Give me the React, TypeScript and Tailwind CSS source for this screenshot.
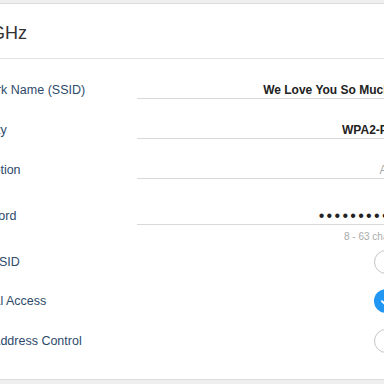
export default function App() {
  const label = "w-[175px] shrink-0 ml-[-2.5px] text-[12.5px] leading-[16px] text-[#2d4a6b] whitespace-nowrap";
  const Circle = ({ on }: { on?: boolean }) =>
    on ? (
      <div className="w-[24px] h-[24px] rounded-full bg-[#2196f3] flex items-center justify-center">
        <svg width="14" height="14" viewBox="0 0 14 14">
          <path d="M3 7.2 L6 10 L11 4.2" fill="none" stroke="white" strokeWidth="2" strokeLinecap="round" strokeLinejoin="round" />
        </svg>
      </div>
    ) : (
      <div className="w-[24px] h-[24px] rounded-full bg-white border-[1.5px] border-[#c4c4c4]" />
    );
  return (
    <div className="w-[384px] h-[384px] overflow-hidden bg-[#efefef] pt-[3px] font-['Liberation_Sans',Arial,sans-serif]">
      <div className="ml-[-50px] w-[500px] bg-white border-y border-[#dcdcdc]">
        <div className="h-[55px] flex items-center pt-[5px] pl-[16px] text-[18px] text-[#333] border-b border-[#e2e2e2]">
          2.4GHz
        </div>
        <div className="pt-[11px] pb-[18px] pl-[14px] flex flex-col">
          <div className="flex h-[40px] items-center">
            <div className={label}>Network Name (SSID)</div>
            <div className="w-[283px] h-[17px] border-b border-[#d9d9d9] text-right leading-[16px] text-[12px] font-bold text-[#222] pr-[29px] whitespace-nowrap">
              We Love You So Much
            </div>
          </div>
          <div className="flex h-[40px] items-center">
            <div className={label}>Security</div>
            <div className="w-[283px] h-[17px] border-b border-[#d9d9d9] text-right leading-[16px] text-[12px] font-bold text-[#222] pr-[15px]">
              WPA2-PSK
            </div>
          </div>
          <div className="flex h-[40px] items-center">
            <div className={label}>Encryption</div>
            <div className="w-[283px] h-[17px] border-b border-[#d9d9d9] text-right leading-[16px] text-[12px] text-[#aaa] pr-[16px]">
              AES
            </div>
          </div>
          <div className="flex h-[30px] mt-[11px] items-center">
            <div className={label}>Password</div>
            <div className="w-[283px] h-[17px] border-b border-[#d9d9d9] text-right leading-[16px] text-[16px] text-[#222] tracking-[2.3px] pr-[6px] whitespace-nowrap">
              ••••••••••••
            </div>
          </div>
          <div className="flex h-[12px] items-center">
            <div className="w-[173px] shrink-0" />
            <div className="w-[283px] text-left pl-[207px] text-[10px] leading-[12px] text-[#aaa] whitespace-nowrap">
              8 - 63 characters
            </div>
          </div>
          <div className="flex h-[38px] items-center">
            <div className={label}>Hide SSID</div>
            <div className="w-[283px] flex justify-end pr-[22px]">
              <Circle />
            </div>
          </div>
          <div className="flex h-[40px] items-center">
            <div className={label}>Internal Access</div>
            <div className="w-[283px] flex justify-end pr-[22px]">
              <Circle on />
            </div>
          </div>
          <div className="flex h-[40px] items-center">
            <div className={label}>MAC Address Control</div>
            <div className="w-[283px] flex justify-end pr-[22px]">
              <Circle />
            </div>
          </div>
        </div>
      </div>
    </div>
  );
}
